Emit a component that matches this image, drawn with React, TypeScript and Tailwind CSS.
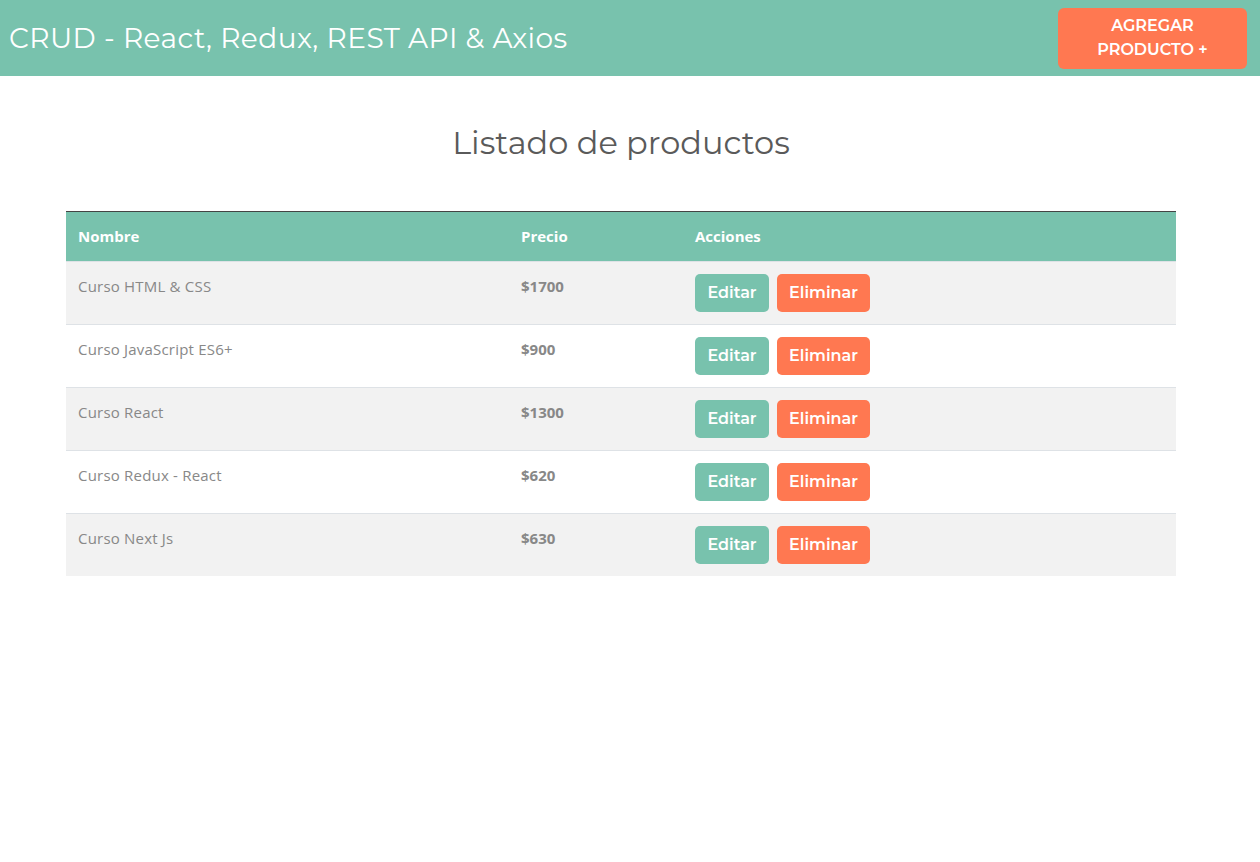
import React from "react";

const productos = [
  { nombre: "Curso HTML & CSS", precio: 1700 },
  { nombre: "Curso JavaScript ES6+", precio: 900 },
  { nombre: "Curso React", precio: 1300 },
  { nombre: "Curso Redux - React", precio: 620 },
  { nombre: "Curso Next Js", precio: 630 },
];

const mont = "font-['Montserrat','Open_Sans',sans-serif]";

export default function App() {
  return (
    <div className="min-h-[862px] bg-white font-['Open_Sans',sans-serif]">
      <header className="flex h-[76px] items-center justify-between bg-[#78c2ad] pl-[9px] pr-[13px]">
        <h1 className={`${mont} text-[28px] font-normal leading-none text-white tracking-[0.45px]`}>
          CRUD - React, Redux, REST API &amp; Axios
        </h1>
        <button
          className={`${mont} flex h-[61px] w-[189px] items-center justify-center rounded-[6px] bg-[#ff7851] text-center text-[16px] font-semibold uppercase leading-[24px] text-white`}
        >
          Agregar
          <br />
          Producto +
        </button>
      </header>

      <main className="ml-[66px] w-[1110px]">
        <h2 className={`${mont} mt-[48px] mb-[49px] text-center text-[32px] font-normal leading-[38px] text-[#5a5a5a]`}>
          Listado de productos
        </h2>

        <table className="w-full border-collapse text-[15px]">
          <thead>
            <tr className="bg-[#78c2ad] text-white">
              <th className="w-[443px] border-t border-[#444] px-[12px] py-0 h-[50px] text-left font-bold">Nombre</th>
              <th className="w-[174px] border-t border-[#444] px-[12px] py-0 h-[50px] text-left font-bold">Precio</th>
              <th className="border-t border-[#444] px-[12px] py-0 h-[50px] text-left font-bold">Acciones</th>
            </tr>
          </thead>
          <tbody>
            {productos.map((p, i) => (
              <tr key={p.nombre} className={i % 2 === 0 ? "bg-[#f2f2f2]" : "bg-white"}>
                <td className="border-t border-[#dee2e6] px-[12px] py-[12px] align-top leading-[24px] text-[#888] tracking-[0.2px]">{p.nombre}</td>
                <td className="border-t border-[#dee2e6] px-[12px] py-[12px] align-top leading-[24px] font-bold text-[#888]">${p.precio}</td>
                <td className="border-t border-[#dee2e6] px-[12px] py-[12px] align-top">
                  <div className="flex gap-[8px]">
                    <button className={`${mont} h-[38px] w-[74px] rounded-[5px] bg-[#78c2ad] text-[16px] font-semibold text-white`}>
                      Editar
                    </button>
                    <button className={`${mont} h-[38px] w-[93px] rounded-[5px] bg-[#ff7851] text-[16px] font-semibold text-white`}>
                      Eliminar
                    </button>
                  </div>
                </td>
              </tr>
            ))}
          </tbody>
        </table>
      </main>
    </div>
  );
}
